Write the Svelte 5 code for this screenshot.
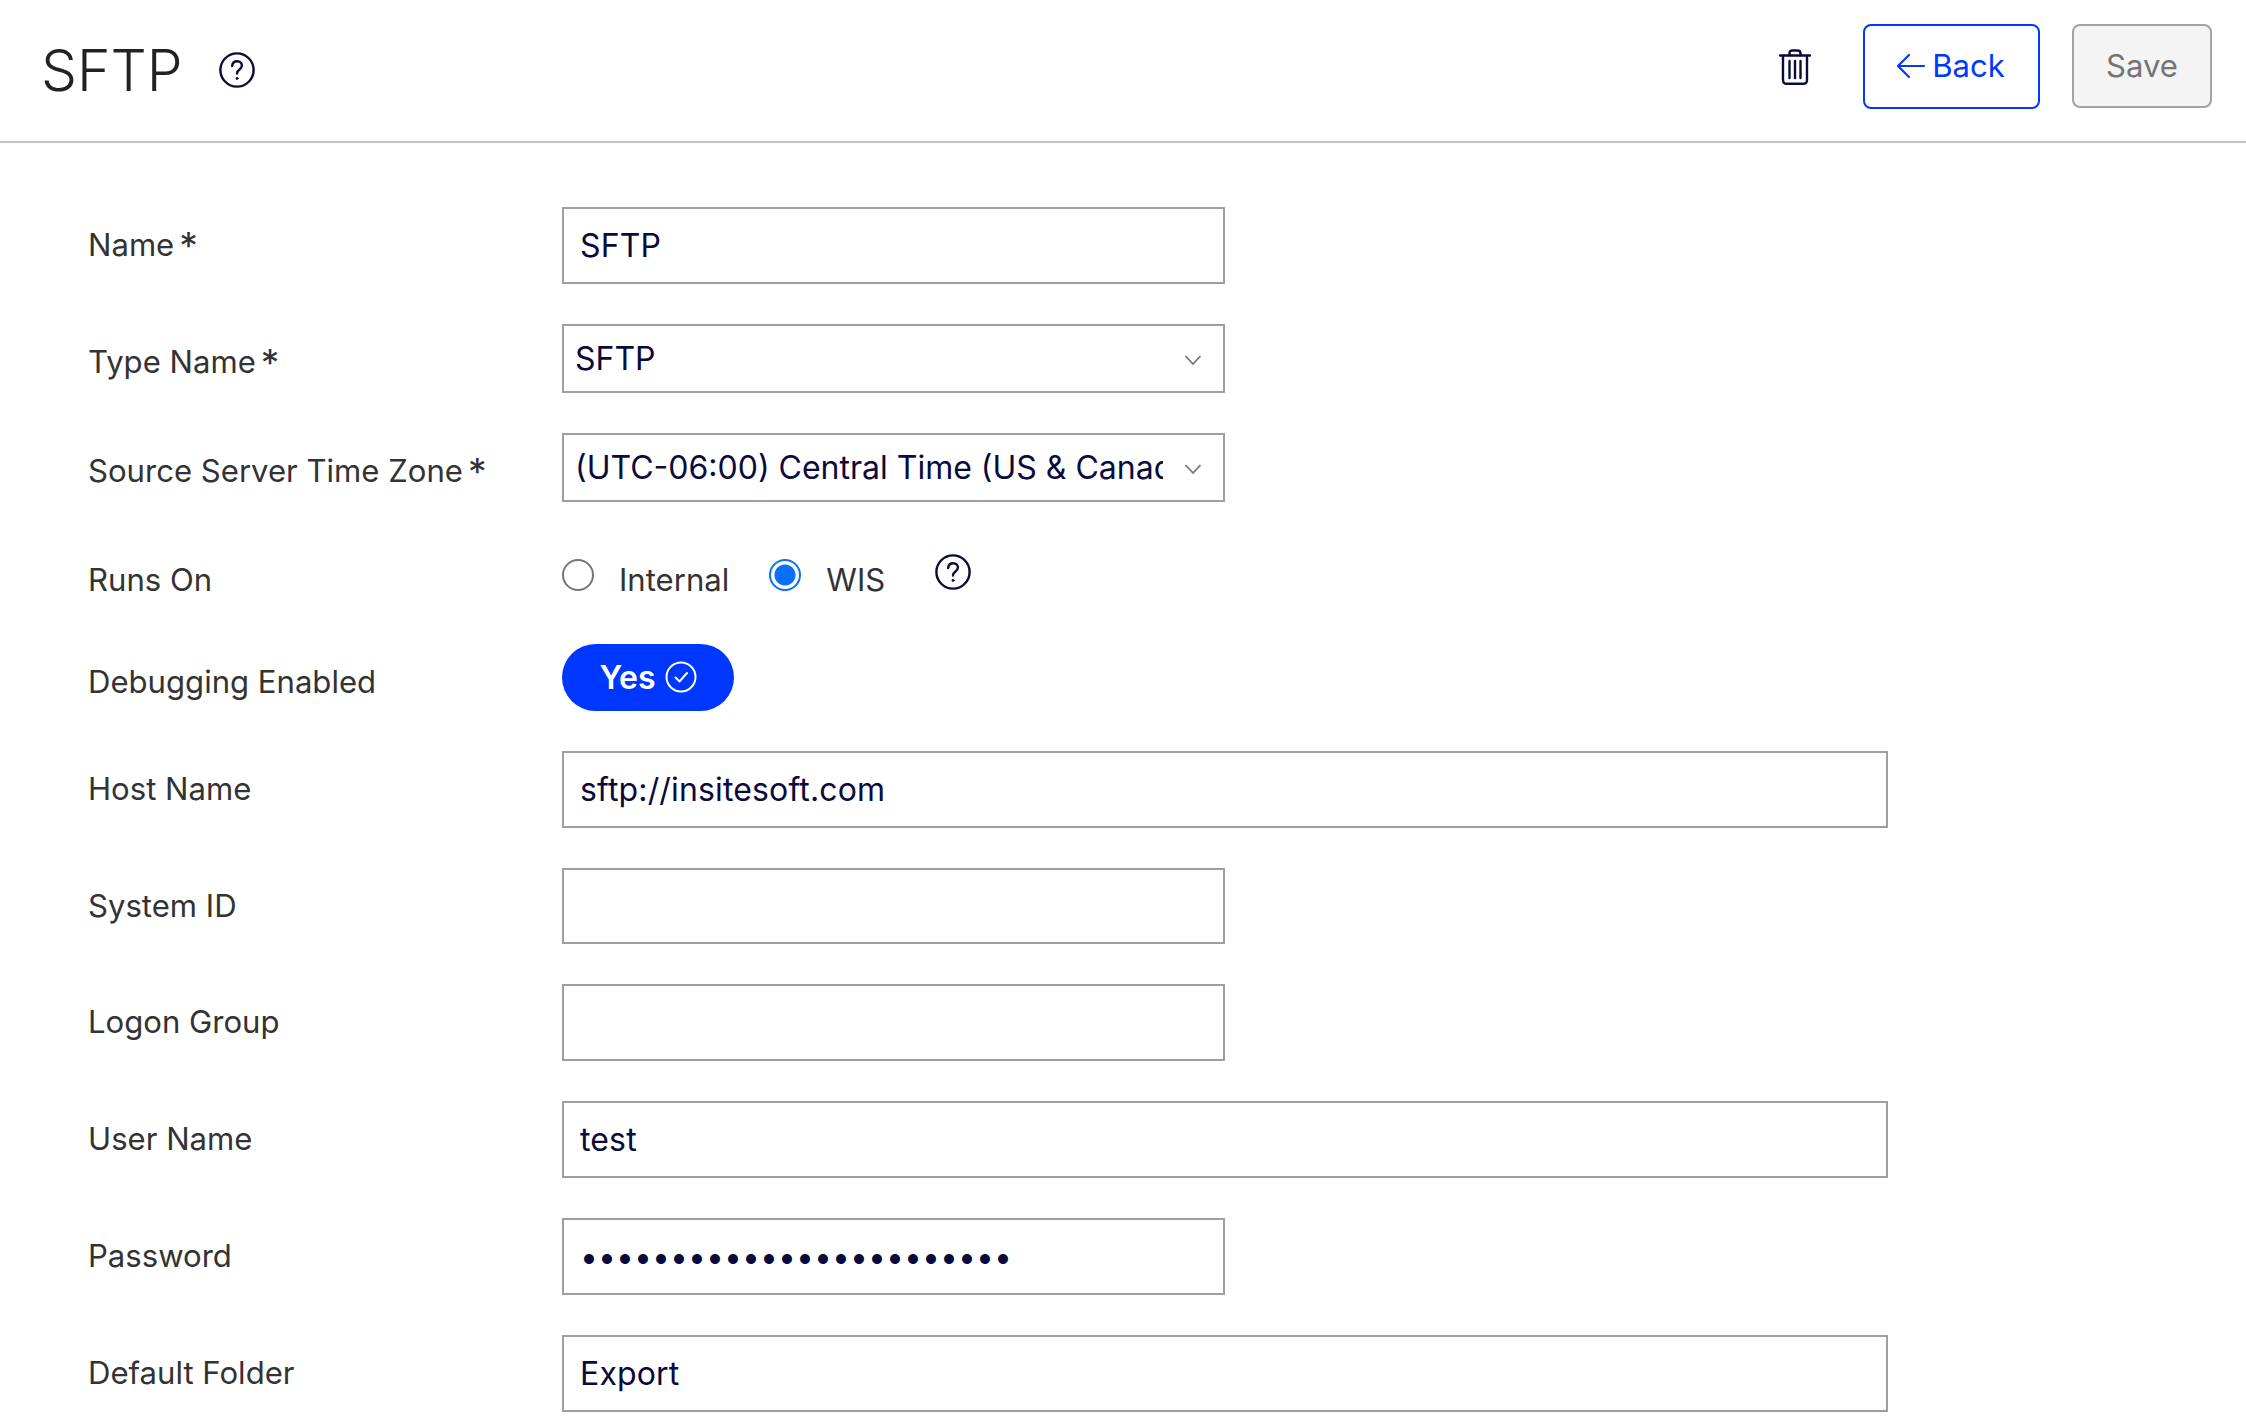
<script lang="ts">
  let name = $state('SFTP');
  let typeName = $state('SFTP');
  let timeZone = $state('(UTC-06:00) Central Time (US & Canada)');
  let runsOn = $state('WIS');
  let debugging = $state(true);
  let hostName = $state('sftp://insitesoft.com');
  let systemId = $state('');
  let logonGroup = $state('');
  let userName = $state('test');
  let password = $state('abcdefghijklmnopqrstuvwx');
  let defaultFolder = $state('Export');
</script>

{#snippet helpIcon()}
  <svg class="help" viewBox="0 0 36 36" fill="none" stroke="currentColor" stroke-width="2.4" stroke-linecap="round" aria-hidden="true">
    <circle cx="18" cy="18" r="16.6" />
    <path d="M13.2 14c.2-2.9 2.2-4.7 4.9-4.7 2.800 0 4.800 1.800 4.800 4.300 0 2-1 3-2.600 4.100-1.500 1-2.300 1.900-2.300 3.800" />
    <circle cx="18" cy="26.400" r="1" fill="currentColor" stroke-width="1" />
  </svg>
{/snippet}

{#snippet chevron()}
  <svg class="chevron" viewBox="0 0 18 12" fill="none" stroke="currentColor" stroke-width="1.800" aria-hidden="true">
    <path d="M1.500 2l7.500 8 7.500-8" />
  </svg>
{/snippet}

<div class="page">
  <header class="topbar">
    <div class="title">
      <h1>SFTP</h1>
      {@render helpIcon()}
    </div>
    <div class="actions">
      <button type="button" class="icon-btn" aria-label="Delete">
        <svg width="32" height="36" viewBox="0 0 32 36" fill="none" stroke="currentColor" stroke-width="2.400" stroke-linecap="round">
          <path d="M1 6.500h30" />
          <path d="M10.500 6V4.500C10.500 2.500 11.500 1.500 13.500 1.500h5c2 0 3 1 3 3V6" />
          <path d="M4 7v24c0 2.500 1.300 3.800 3.800 3.800h16.400c2.500 0 3.800-1.300 3.800-3.800V7" />
          <path d="M10.500 12v17M16 12v17M21.500 12v17" />
        </svg>
      </button>
      <button type="button" class="btn btn-back">
        <svg width="30" height="26" viewBox="0 0 30 26" fill="none" stroke="currentColor" stroke-width="2.200" stroke-linecap="round" stroke-linejoin="round" aria-hidden="true">
          <path d="M28 13H2M13 2L2 13l11 11" />
        </svg>
        Back
      </button>
      <button type="button" class="btn btn-save" disabled>Save</button>
    </div>
  </header>

  <form class="form">
    <div class="row">
      <label for="name">Name<span class="req">*</span></label>
      <input id="name" class="input" type="text" bind:value={name} />
    </div>

    <div class="row row-low">
      <label for="type">Type Name<span class="req">*</span></label>
      <div class="select-wrap">
        <select id="type" bind:value={typeName}>
          <option>SFTP</option>
          <option>FTP</option>
        </select>
        {@render chevron()}
      </div>
    </div>

    <div class="row row-low">
      <label for="tz">Source Server Time Zone<span class="req">*</span></label>
      <div class="select-wrap">
        <select id="tz" bind:value={timeZone}>
          <option>(UTC-06:00) Central Time (US &amp; Canada)</option>
        </select>
        {@render chevron()}
      </div>
    </div>

    <div class="row row-radio">
      <span class="label">Runs On</span>
      <div class="radios">
        <label class="radio">
          <input type="radio" name="runsOn" value="Internal" bind:group={runsOn} />
          <span>Internal</span>
        </label>
        <label class="radio">
          <input type="radio" name="runsOn" value="WIS" bind:group={runsOn} />
          <span>WIS</span>
        </label>
        {@render helpIcon()}
      </div>
    </div>

    <div class="row row-toggle">
      <span class="label">Debugging Enabled</span>
      <button type="button" class="toggle" onclick={() => (debugging = !debugging)}>
        {debugging ? 'Yes' : 'No'}
        <svg width="32" height="32" viewBox="0 0 32 32" fill="none" stroke="currentColor" stroke-width="2" stroke-linecap="round" stroke-linejoin="round" aria-hidden="true">
          <circle cx="16" cy="16" r="14.500" />
          <path d="M10.500 16.500l4 4 7.500-8.500" />
        </svg>
      </button>
    </div>

    <div class="row">
      <label for="host">Host Name</label>
      <input id="host" class="input wide" type="text" bind:value={hostName} />
    </div>

    <div class="row">
      <label for="system">System ID</label>
      <input id="system" class="input" type="text" bind:value={systemId} />
    </div>

    <div class="row">
      <label for="logon">Logon Group</label>
      <input id="logon" class="input" type="text" bind:value={logonGroup} />
    </div>

    <div class="row">
      <label for="user">User Name</label>
      <input id="user" class="input wide" type="text" bind:value={userName} />
    </div>

    <div class="row">
      <label for="password">Password</label>
      <input id="password" class="input secret" type="password" bind:value={password} />
    </div>

    <div class="row">
      <label for="folder">Default Folder</label>
      <input id="folder" class="input wide" type="text" bind:value={defaultFolder} />
    </div>
  </form>
</div>

<style>
  :global(body) {
    margin: 0;
    background: #fff;
  }

  .page {
    height: 1426px;
    overflow: hidden;
    font-family: Inter, "Liberation Sans", sans-serif;
    font-size: 31.1px;
    color: #333;
  }

  /* Header */
  .topbar {
    height: 141px;
    box-sizing: content-box;
    border-bottom: 2px solid #c4c4c4;
    display: flex;
    align-items: flex-start;
    justify-content: space-between;
    padding: 0 34px 0 41px;
  }

  .title {
    display: flex;
    align-items: center;
    gap: 36px;
    height: 140px;
  }

  h1 {
    margin: 0;
    font-size: 57px;
    font-weight: 350;
    line-height: 1;
    color: #222;
  }

  .help {
    width: 36px;
    height: 36px;
    color: #0a0a3c;
    flex: none;
  }

  .actions {
    display: flex;
    align-items: flex-start;
    padding-top: 24px;
  }

  .icon-btn {
    border: none;
    background: none;
    padding: 0;
    margin: 25px 52px 0 0;
    color: #0a0a3c;
    display: flex;
  }

  .btn {
    box-sizing: border-box;
    height: 85px;
    border-radius: 8px;
    font: inherit;
    display: flex;
    align-items: center;
    justify-content: center;
    gap: 6px;
    padding: 0 0 1px;
  }

  .btn-back {
    width: 177px;
    border: 2px solid #0038ff;
    background: #fff;
    color: #0038ff;
    margin-right: 32px;
    padding-right: 2px;
  }

  .btn-save {
    width: 140px;
    height: 84px;
    border: 2px solid #a3a3a3;
    background: #f4f4f4;
    color: #757575;
  }

  /* Form */
  .form {
    display: flex;
    flex-direction: column;
    gap: 40px;
    padding: 64px 0 0 88px;
  }

  .row {
    display: flex;
    align-items: center;
  }

  .row > label,
  .label {
    width: 474px;
    flex: none;
    padding-bottom: 1px;
  }

  .row-low > label {
    padding: 7px 0 0;
  }

  .row-toggle > .label {
    padding: 9px 0 0;
  }

  .req {
    margin-left: 5px;
    font-size: 37px;
    line-height: 0;
    vertical-align: -3px;
    color: #333;
  }

  .input {
    box-sizing: border-box;
    width: 663px;
    height: 76.8px;
    border: 2px solid #9e9e9e;
    border-radius: 0;
    padding: 0 16px;
    font: inherit;
    font-size: 32px;
    letter-spacing: 0.15px;
    color: #0a0a3c;
    background: #fff;
    outline: none;
  }

  .input.secret {
    letter-spacing: 0;
  }

  .input.wide {
    width: 1326px;
  }

  .select-wrap {
    position: relative;
    width: 663px;
    height: 69px;
  }

  select {
    box-sizing: border-box;
    width: 100%;
    height: 100%;
    appearance: none;
    border: 2px solid #9e9e9e;
    border-radius: 0;
    background: #fff;
    padding: 0 60px 0 11px;
    font: inherit;
    font-size: 32px;
    color: #0a0a3c;
    outline: none;
  }

  .chevron {
    position: absolute;
    right: 23px;
    top: 30px;
    width: 18px;
    height: 12px;
    color: #757575;
    pointer-events: none;
  }

  .row-radio {
    height: 62.2px;
  }

  .row-radio > .label {
    padding: 14px 0 0;
  }

  .radios {
    display: flex;
    align-items: flex-start;
    height: 60px;
  }

  .radio {
    display: flex;
    align-items: flex-start;
    margin-right: 40px;
  }

  .radio span {
    margin-top: 17px;
    line-height: 40px;
  }

  .radio input {
    appearance: none;
    box-sizing: border-box;
    width: 32px;
    height: 32px;
    margin: 16px 25px 0 0;
    border: 2px solid #757575;
    border-radius: 50%;
    background: #fff;
  }

  .radio input:checked {
    border-color: #0a6eff;
    background: radial-gradient(circle, #0a6eff 0 10px, #fff 11px);
  }

  .radios .help {
    margin: 11px 0 0 10px;
  }

  .toggle {
    box-sizing: border-box;
    width: 172px;
    height: 66.9px;
    border: none;
    border-radius: 34px;
    background: #0037ff;
    color: #fff;
    font: inherit;
    font-size: 32px;
    font-weight: 600;
    display: flex;
    align-items: center;
    justify-content: center;
    gap: 9px;
    padding: 0;
  }
</style>
